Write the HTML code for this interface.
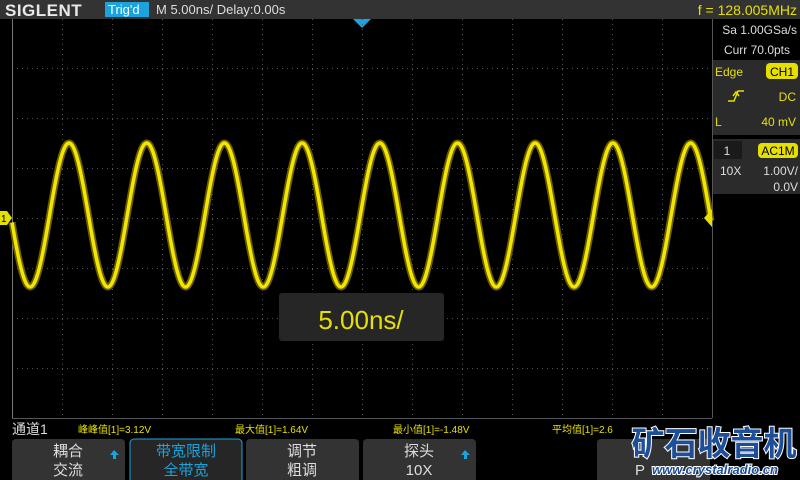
<!DOCTYPE html>
<html><head><meta charset="utf-8"><style>
html,body{margin:0;padding:0;background:#000;width:800px;height:480px;overflow:hidden;font-family:"Liberation Sans","Noto Sans CJK SC",sans-serif}
svg{display:block}
</style></head><body>
<svg id="s" width="800" height="480" viewBox="0 0 800 480" xmlns="http://www.w3.org/2000/svg" font-family="Liberation Sans, Noto Sans CJK SC, sans-serif">
<rect width="800" height="480" fill="#000"/>
<rect x="0" y="0" width="800" height="19" fill="#333"/>
<text x="5" y="16" font-size="17" font-weight="bold" fill="#e8e8e8" letter-spacing="0.5">SIGLENT</text>
<rect x="105" y="2" width="44" height="15" fill="#1aa3dc"/>
<text x="108" y="14" font-size="13" fill="#fff">Trig'd</text>
<text x="156" y="14" font-size="13" fill="#ddd">M 5.00ns/  Delay:0.00s</text>
<text x="797" y="15" font-size="14" fill="#e6e000" text-anchor="end">f = 128.005MHz</text>
<polygon points="353,19 371,19 362,28" fill="#1aa3dc"/>
<g id="grid" stroke="#555" stroke-width="1" stroke-dasharray="1,4"></g>
<line x1="12.5" y1="19" x2="12.5" y2="418" stroke="#777"/>
<line x1="712.5" y1="19" x2="712.5" y2="418" stroke="#555"/>
<line x1="12" y1="418.5" x2="712" y2="418.5" stroke="#555"/>
<path id="glow" fill="none" stroke="#6b5f00" stroke-width="7" stroke-linejoin="round"/>
<path id="wave" fill="none" stroke="#f2e600" stroke-width="3.5" stroke-linejoin="round"/>
<polygon points="0,211 7,211 12,218 7,225 0,225" fill="#e6e000"/>
<text x="1" y="222" font-size="10" fill="#000">1</text>
<polygon points="712,209 712,227 704,218" fill="#e6e000"/>
<rect x="279" y="293" width="165" height="48" rx="3" fill="#262626"/>
<text x="361" y="329" font-size="26" fill="#e6e000" text-anchor="middle">5.00ns/</text>
<rect x="713" y="19" width="87" height="40" fill="#000"/>
<text x="797" y="34" font-size="12" fill="#ddd" text-anchor="end">Sa 1.00GSa/s</text>
<text x="790" y="54" font-size="12" fill="#ddd" text-anchor="end">Curr 70.0pts</text>
<rect x="713" y="60" width="87" height="75" fill="#2b2b2b"/>
<text x="715" y="76" font-size="12" fill="#e6e000">Edge</text>
<rect x="766" y="63" width="32" height="16" rx="4" fill="#e6e000"/>
<text x="782" y="76" font-size="12" fill="#000" text-anchor="middle">CH1</text>
<path d="M728,101 H734 L738,91 H744 M733,96 L736,92 L739,96" fill="none" stroke="#e6e000" stroke-width="1.5"/>
<text x="796" y="101" font-size="12" fill="#e6e000" text-anchor="end">DC</text>
<text x="715" y="126" font-size="12" fill="#e6e000">L</text>
<text x="796" y="126" font-size="12" fill="#e6e000" text-anchor="end">40 mV</text>
<rect x="713" y="139" width="87" height="55" fill="#2b2b2b"/>
<rect x="714" y="141" width="28" height="18" fill="#1a1a1a"/>
<text x="727" y="155" font-size="12" fill="#ddd" text-anchor="middle">1</text>
<rect x="758" y="143" width="40" height="15" rx="4" fill="#e6e000"/>
<text x="778" y="155" font-size="12" fill="#000" text-anchor="middle">AC1M</text>
<text x="720" y="175" font-size="12" fill="#ddd">10X</text>
<text x="798" y="175" font-size="12" fill="#ddd" text-anchor="end">1.00V/</text>
<text x="798" y="191" font-size="12" fill="#ddd" text-anchor="end">0.0V</text>
<text x="12" y="434" font-size="14" fill="#ddd">通道1</text>
<g font-size="10" fill="#e6e000">
<text x="78" y="433">峰峰值[1]=3.12V</text>
<text x="235" y="433">最大值[1]=1.64V</text>
<text x="393" y="433">最小值[1]=-1.48V</text>
<text x="552" y="433">平均值[1]=2.6</text>
</g>
<g font-size="15" text-anchor="middle">
<rect x="12" y="439" width="113" height="45" rx="4" fill="#333"/>
<text x="68" y="456" fill="#ddd">耦合</text><text x="68" y="475" fill="#ddd">交流</text>
<polygon points="114,450 110,455 113,455 113,459 116,459 116,455 119,455" fill="#1aa3dc"/>
<rect x="130" y="439" width="112" height="45" rx="4" fill="#262626" stroke="#1aa3dc" stroke-width="1"/>
<text x="186" y="456" fill="#1aa3dc">带宽限制</text><text x="186" y="475" fill="#1aa3dc">全带宽</text>
<rect x="246" y="439" width="113" height="45" rx="4" fill="#333"/>
<text x="302" y="456" fill="#ddd">调节</text><text x="302" y="475" fill="#ddd">粗调</text>
<rect x="363" y="439" width="113" height="45" rx="4" fill="#333"/>
<text x="419" y="456" fill="#ddd">探头</text><text x="419" y="475" fill="#ddd">10X</text>
<polygon points="465,450 461,455 464,455 464,459 467,459 467,455 470,455" fill="#1aa3dc"/>
<rect x="597" y="439" width="113" height="45" rx="4" fill="#333"/>
<text x="640" y="475" fill="#ddd">P</text>
</g>
<text x="714" y="455" font-size="33" font-weight="bold" fill="#1d4e9a" stroke="#fff" stroke-width="2" paint-order="stroke" text-anchor="middle" font-family="Noto Sans CJK SC, sans-serif">矿石收音机</text>
<text x="715" y="474" font-size="13" font-weight="bold" fill="#1d4e9a" stroke="#fff" stroke-width="2" paint-order="stroke" text-anchor="middle" font-style="italic">www.crystalradio.cn</text>
</svg>
<script>
var g=document.getElementById('grid'),h='';
for(var x=62;x<712;x+=50)h+='<line x1="'+(x+.5)+'" y1="19" x2="'+(x+.5)+'" y2="418"/>';
for(var y=68;y<418;y+=50)h+='<line x1="12" y1="'+(y+.5)+'" x2="712" y2="'+(y+.5)+'"/>';
g.innerHTML=h;
var d='';for(var x=12;x<=711;x+=1){var yy=215-72*Math.cos(2*Math.PI*(x-69)/77.7);d+=(x==12?'M':'L')+x+','+yy.toFixed(1);}
document.getElementById('wave').setAttribute('d',d);document.getElementById('glow').setAttribute('d',d);
</script>
</body></html>
